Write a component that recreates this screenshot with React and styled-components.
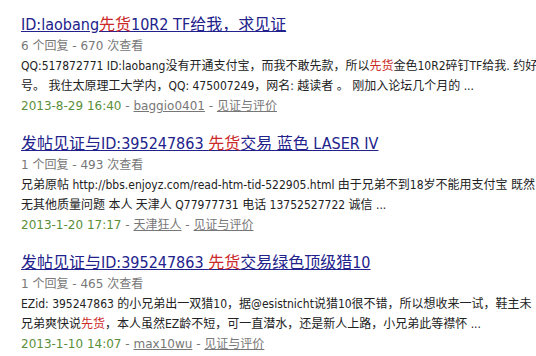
import React from 'react';
import styled, { createGlobalStyle } from 'styled-components';

const GlobalStyle = createGlobalStyle`
	html, body {
		margin: 0;
		padding: 0;
		background: #fff;
		overflow: hidden;
	}
	body {
		font-family: "DejaVu Sans", "Noto Sans CJK SC", sans-serif;
	}
`;

const ResultList = styled.div`
	padding: 14px 0 0 21px;
	width: 536px;
	height: 356px;
	box-sizing: border-box;
	overflow: hidden;
	white-space: nowrap;
`;

const Result = styled.div`
	margin-bottom: 17px;
`;

const Title = styled.a`
	display: block;
	font-family: "DejaVu Sans Condensed", "Noto Sans CJK SC", sans-serif;
	font-size: 16px;
	line-height: 22px;
	color: #22228c;
	text-decoration: underline;
	cursor: pointer;
`;

const Hit = styled.span`
	color: #cc2a2a;
`;

const Meta = styled.div`
	font-size: 12px;
	line-height: 20px;
	color: #777;
`;

const Snippet = styled.div`
	font-family: "DejaVu Sans Condensed", "Noto Sans CJK SC", sans-serif;
	font-size: 12px;
	line-height: 20px;
	color: #222;
`;

const Footer = styled.div`
	font-size: 12px;
	line-height: 20px;
	color: #5a8f3a;
`;

const GrayLink = styled.a`
	color: #777;
	text-decoration: underline;
	cursor: pointer;
`;

const Sep = styled.span`
	color: #777;
`;

const results = [
	{
		title: ['ID:laobang', { hit: '先货' }, '10R2 TF给我，求见证'],
		meta: '6 个回复 - 670 次查看',
		lines: [
			['QQ:517872771 ID:laobang没有开通支付宝，而我不敢先款，所以', { hit: '先货' }, '金色10R2碎钉TF给我. 约好'],
			['号。 我住太原理工大学内，QQ: 475007249，网名: 越读者 。 刚加入论坛几个月的 ...']
		],
		date: '2013-8-29 16:40',
		user: 'baggio0401'
	},
	{
		title: ['发帖见证与ID:395247863 ', { hit: '先货' }, '交易 蓝色 LASER IV'],
		meta: '1 个回复 - 493 次查看',
		lines: [
			['兄弟原帖 http://bbs.enjoyz.com/read-htm-tid-522905.html 由于兄弟不到18岁不能用支付宝 既然'],
			['无其他质量问题 本人 天津人 Q77977731 电话 13752527722 诚信 ...']
		],
		date: '2013-1-20 17:17',
		user: '天津狂人'
	},
	{
		title: ['发帖见证与ID:395247863 ', { hit: '先货' }, '交易绿色顶级猎10'],
		meta: '1 个回复 - 465 次查看',
		lines: [
			['EZid: 395247863 的小兄弟出一双猎10，据@esistnicht说猎10很不错，所以想收来一试，鞋主未'],
			['兄弟爽快说', { hit: '先货' }, '，本人虽然EZ龄不短，可一直潜水，还是新人上路，小兄弟此等襟怀 ...']
		],
		date: '2013-1-10 14:07',
		user: 'max10wu'
	}
];

const renderParts = (parts) =>
	parts.map((p, i) => (typeof p === 'string' ? p : <Hit key={i}>{p.hit}</Hit>));

export default function App() {
	return (
		<>
			<GlobalStyle />
			<ResultList>
				{results.map((r) => (
					<Result key={r.date}>
						<Title>{renderParts(r.title)}</Title>
						<Meta>{r.meta}</Meta>
						{r.lines.map((line, i) => (
							<Snippet key={i}>{renderParts(line)}</Snippet>
						))}
						<Footer>
							{r.date} <Sep>-</Sep> <GrayLink>{r.user}</GrayLink> <Sep>-</Sep>{' '}
							<GrayLink>见证与评价</GrayLink>
						</Footer>
					</Result>
				))}
			</ResultList>
		</>
	);
}
